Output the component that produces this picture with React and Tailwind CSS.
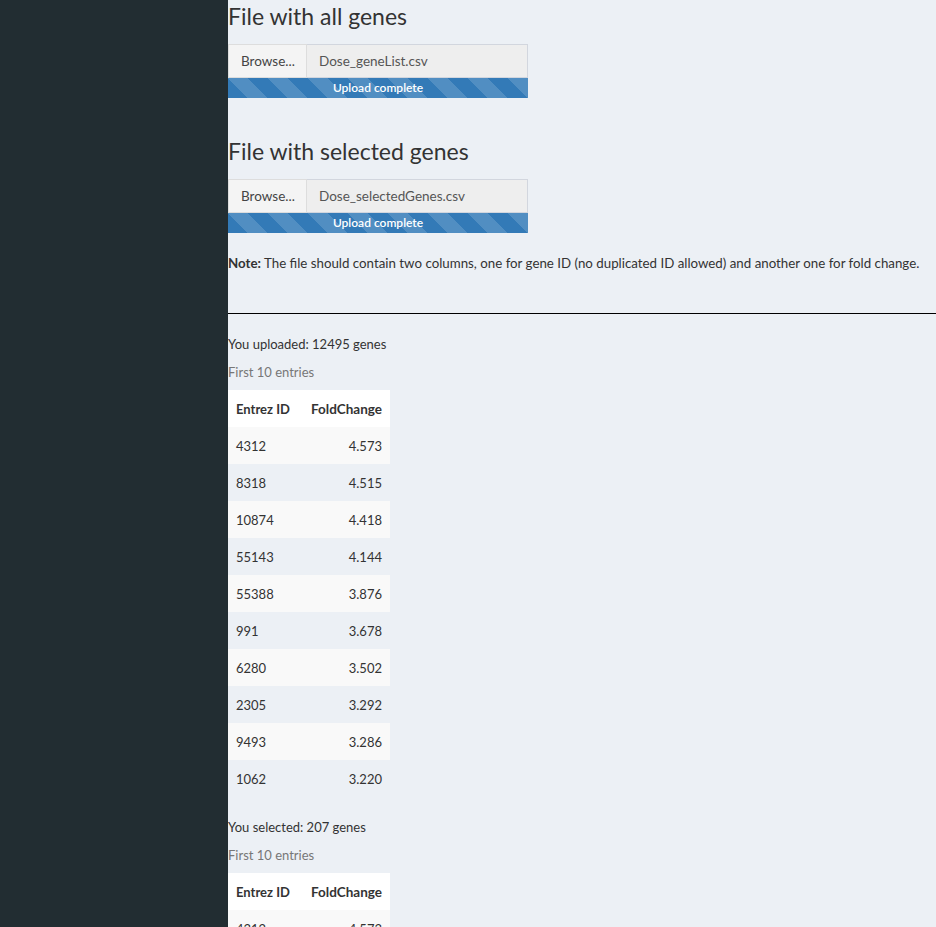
import React from 'react';

const genes = [
  ['4312', '4.573'],
  ['8318', '4.515'],
  ['10874', '4.418'],
  ['55143', '4.144'],
  ['55388', '3.876'],
  ['991', '3.678'],
  ['6280', '3.502'],
  ['2305', '3.292'],
  ['9493', '3.286'],
  ['1062', '3.220'],
];

function FileInput({ name }) {
  return (
    <div className="w-[300px]">
      <div className="flex h-[34px]">
        <div className="w-[79px] flex items-center pl-[12px] bg-[#f4f4f4] border border-[#ddd] text-[#444] text-[13.5px]">
          Browse...
        </div>
        <div className="flex-1 flex items-center pl-[12px] bg-[#eee] border border-l-0 border-[#d2d6de] text-[#555] text-[13.5px]">
          {name}
        </div>
      </div>
      <div className="h-[20px] bg-[#337ab7] bg-[linear-gradient(45deg,rgba(255,255,255,.15)_25%,transparent_25%,transparent_50%,rgba(255,255,255,.15)_50%,rgba(255,255,255,.15)_75%,transparent_75%,transparent)] bg-size-[40px_40px] flex items-center justify-center text-white text-[12px] font-semibold">
        Upload complete
      </div>
    </div>
  );
}

function GeneTable() {
  return (
    <table className="mt-[8px] border-collapse text-[13px] text-[#333]">
      <thead>
        <tr className="h-[37px] bg-white">
          <th className="px-[8px] text-left font-bold w-[73px]">Entrez ID</th>
          <th className="px-[8px] text-right font-bold w-[89px] text-[13.5px]">FoldChange</th>
        </tr>
      </thead>
      <tbody>
        {genes.map((g, i) => (
          <tr key={g[0]} className={`h-[37px] ${i % 2 === 0 ? 'bg-[#f9f9f9]' : ''}`}>
            <td className="px-[8px] text-left">{g[0]}</td>
            <td className="px-[8px] text-right">{g[1]}</td>
          </tr>
        ))}
      </tbody>
    </table>
  );
}

export default function App() {
  return (
    <div className="flex h-[927px] overflow-hidden bg-[#ecf0f5] text-[#333] font-['Lato','Liberation_Sans',sans-serif] text-[13px] leading-[20px]">
      <aside className="w-[228px] shrink-0 bg-[#222d32]" />
      <main className="flex-1">
        <h3 className="mt-[3px] mb-[15px] text-[23px] leading-[26px] font-normal">File with all genes</h3>
        <FileInput name="Dose_geneList.csv" />

        <h3 className="mt-[40px] mb-[15px] text-[23px] leading-[26px] font-normal">File with selected genes</h3>
        <FileInput name="Dose_selectedGenes.csv" />

        <p className="mt-[20px] whitespace-nowrap text-[13.3px]">
          <b>Note:</b> The file should contain two columns, one for gene ID (no duplicated ID allowed) and another one for fold change.
        </p>

        <hr className="mt-[40px] border-t border-black" />

        <p className="mt-[20px]">You uploaded: 12495 genes</p>
        <p className="mt-[8px] text-[#777]">First 10 entries</p>
        <GeneTable />

        <p className="mt-[20px]">You selected: 207 genes</p>
        <p className="mt-[8px] text-[#777]">First 10 entries</p>
        <GeneTable />
      </main>
    </div>
  );
}
